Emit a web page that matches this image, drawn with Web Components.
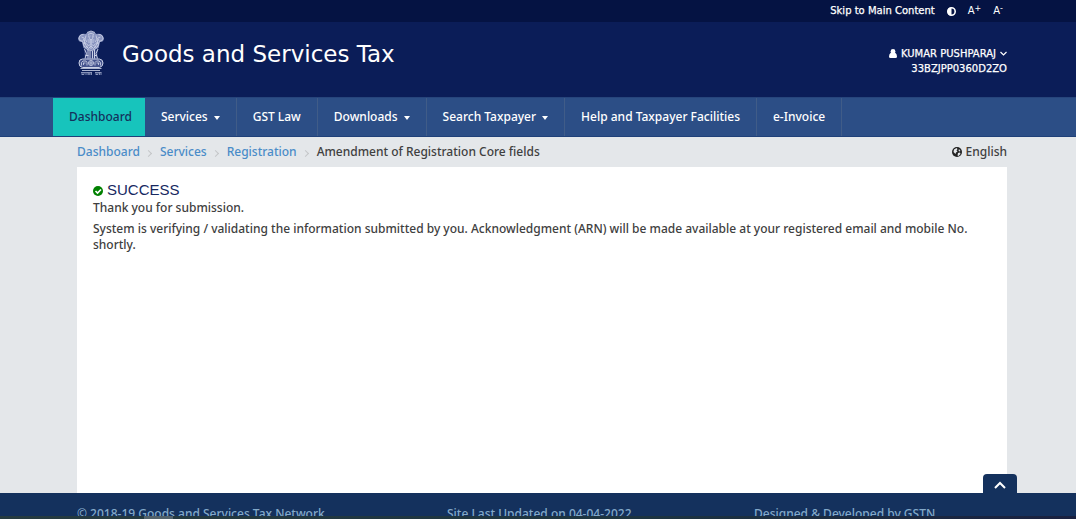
<!DOCTYPE html>
<html lang="en">
<head>
<meta charset="utf-8">
<title>Goods and Services Tax</title>
<style>
:root{--gutter-l:77px;--gutter-r:69px;--ui:"Noto Sans","Open Sans",sans-serif;--wide:"DejaVu Sans",sans-serif}
html,body{margin:0;height:100%}
body{background:#e4e7ea;color:#404040;font:500 12px/16px var(--ui)}
</style>
</head>
<body>
<gst-page>
  <gst-topbar></gst-topbar>
  <gst-header user="KUMAR PUSHPARAJ" gstin="33BZJPP0360D2ZO">Goods and Services Tax</gst-header>
  <gst-nav>
    <gst-nav-item active>Dashboard</gst-nav-item>
    <gst-nav-item menu>Services</gst-nav-item>
    <gst-nav-item>GST Law</gst-nav-item>
    <gst-nav-item menu>Downloads</gst-nav-item>
    <gst-nav-item menu>Search Taxpayer</gst-nav-item>
    <gst-nav-item>Help and Taxpayer Facilities</gst-nav-item>
    <gst-nav-item>e-Invoice</gst-nav-item>
  </gst-nav>
  <gst-breadcrumb></gst-breadcrumb>
  <gst-message>
    <span slot="title">SUCCESS</span>
    <span slot="lead">Thank you for submission.</span>
    System is verifying / validating the information submitted by you. Acknowledgment (ARN) will be made available at your registered email and mobile No. shortly.
  </gst-message>
  <gst-footer></gst-footer>
</gst-page>
<script>
const define=(name,html,setup)=>customElements.define(name,class extends HTMLElement{
  constructor(){
    super();
    const t=document.createElement('template');
    t.innerHTML=html;
    this.attachShadow({mode:'open'}).append(t.content.cloneNode(true));
  }
  connectedCallback(){ if(setup) setup(this,this.shadowRoot); }
});

define('gst-page',`
<style>:host{display:flex;flex-direction:column;min-height:100vh}</style><slot></slot>`);

define('gst-topbar',`
<style>
:host{display:flex;justify-content:flex-end;align-items:center;gap:12px;height:22px;padding:0 73px 0 var(--gutter-l);background:#051343;font:10px/16px var(--wide);color:#fff}
a,button{-webkit-text-stroke:.25px #fff}
a{color:inherit;text-decoration:none}
button{all:unset;cursor:pointer;display:block}
svg{display:block}
sup{font-size:8px;line-height:1;vertical-align:3px}
</style>
<a href="#main">Skip to Main Content</a>
<button aria-label="Toggle contrast"><svg width="9" height="9" viewBox="0 0 18 18"><circle cx="9" cy="9" r="7.4" fill="none" stroke="#fff" stroke-width="3.2"/><path d="M9 1a8 8 0 0 0 0 16z" fill="#fff"/></svg></button>
<button>A<sup>+</sup></button>
<button>A<sup>-</sup></button>`);

define('gst-emblem',`
<style>:host{display:block}svg{display:block}</style>
<svg width="28" height="46" viewBox="0 0 56 92" fill="none" stroke="#cbd1e6" stroke-width="1.7" role="img" aria-label="State emblem">
<path fill="#8a95c0" stroke="none" d="M17 8Q28-3 39 8Q52 6 54 18Q52 25 46 24L43 36Q28 47 13 36L10 24Q4 25 2 18Q4 6 17 8z"/>
<path fill="#35437f" stroke="none" d="M14 40h28l-2 18H16z"/>
<path d="M20 5q8-6 16 0M22 9q6-5 12 0M4 18q0-9 9-9M52 18q0-9-9-9M9 14l5 2M47 14l-5 2M4 19l7 4 4-7M52 19l-7 4-4-7M18 11q-5 8 2 13M38 11q5 8-2 13M23 11l2 6 3 3 3-3 2-6M21 20h14M22 24h12M25 12h2M30 12h2M12 24q0 10 8 13M44 24q0 10-8 13M16 24q0 8 6 11M40 24q0 8-6 11M19 27l4 5 5-5 5 5 4-5M18 32l5 5 5-5 5 5 5-5M20 39q8 5 16 0M15 19v9M41 19v9M28 20v18"/>
<path stroke-width="2" d="M15 38l4 9-3 10M22 40v17M26 42v15M31 42v15M35 40v17M42 38l-4 9 3 10M17 51h6M34 51h5"/>
<path d="M11 58h34q7 1 7 8t-7 9H11q-7-1-7-9t7-8z" fill="#46548e" stroke-width="2"/>
<circle cx="28" cy="66" r="5"/><path d="M28 61v10M23 66h10M9 71v-6l3-3h6l2 3v6M12 66h5M13 70v-4M36 71v-6l3-3h5l3 3v6M39 66h6M43 70v-4M7 77h42M10 81h36"/>
<path stroke-width="1.5" stroke="#aab2d2" d="M8 85h22M36 85h13M10 85v5M14 85v4M18 86v4M22 85v5M26 86v4M29 85v5M38 85v5M42 86v3M45 85v5M48 85v5M10 89h4M22 88h4M38 89h4"/>
</svg>`);

define('gst-header',`
<style>
:host{display:flex;align-items:flex-start;min-height:75px;box-sizing:border-box;padding:8px var(--gutter-r) 0 var(--gutter-l);background:#0b1d58;color:#fff;font-family:var(--wide)}
h1{margin:9px 0 0 17px;font-size:23px;line-height:30px;font-weight:400;flex:1}
.user{margin-top:16px;font-size:10px;line-height:15px;text-align:right}
button{all:unset;cursor:pointer;display:flex;align-items:center;gap:4px;margin-left:auto;width:max-content}
.name,.id{-webkit-text-stroke:.25px #fff}
svg{display:block}
</style>
<gst-emblem></gst-emblem>
<h1><slot></slot></h1>
<div class="user">
<button aria-haspopup="true"><svg width="8" height="9" viewBox="0 0 16 18" fill="#fff"><circle cx="8" cy="5" r="4.8"/><path d="M4 7h8q4 3 4 8q0 3-3 3H3q-3 0-3-3q0-5 4-8z"/></svg><span class="name"></span><svg width="7" height="5" viewBox="0 0 14 10" fill="none" stroke="#fff" stroke-width="2.4"><path d="M1 2l6 6 6-6"/></svg></button>
<span class="id"></span></div>`,(el,r)=>{
  r.querySelector('.name').textContent=el.getAttribute('user');
  r.querySelector('.id').textContent=el.getAttribute('gstin');
});

define('gst-nav',`
<style>
:host{display:block;background:#2c4e86;border-top:1px solid #27457c;border-bottom:1px solid #1f4079;padding-left:53px}
nav{display:flex;min-height:38px}
</style><nav aria-label="Main"><slot></slot></nav>`);

define('gst-nav-item',`
<style>
:host{display:flex;border-right:1px solid #405c88}
a{display:flex;align-items:center;gap:6px;padding:0 16px;color:#fff;text-decoration:none;line-height:16px;white-space:nowrap}
i{display:none;border:3px solid transparent;border-top:4px solid #fff;border-bottom:0;margin-top:2px}
:host([menu]) i{display:block}
:host([active]){background:#17c4bc;border-color:#17c4bc}
:host([active]) a{color:#14315d;padding-right:12px}
</style><a href="#"><slot></slot><i></i></a>`);

define('gst-breadcrumb',`
<style>
:host{display:flex;justify-content:space-between;align-items:center;height:30px;padding:0 var(--gutter-r) 0 var(--gutter-l)}
ol{display:flex;list-style:none;margin:0;padding:0}
li{display:flex;align-items:center}
li:not(:last-child)::after{content:"";width:4px;height:4px;border:solid #c4c6c8;border-width:1px 1px 0 0;transform:rotate(45deg);margin:2px 9px 0 6px}
a{color:#4a8cc8;text-decoration:none}
button{all:unset;cursor:pointer;display:flex;align-items:center;gap:4px}
svg{display:block}
</style>
<ol><li><a href="#">Dashboard</a></li><li><a href="#">Services</a></li><li><a href="#">Registration</a></li><li>Amendment of Registration Core fields</li></ol>
<button><svg width="10" height="10" viewBox="0 0 20 20"><circle cx="10" cy="10" r="10" fill="#222"/><path fill="#e4e7ea" d="M4 5l5-3 2 2-2 3 2 2-3 2-1 3-4-4zM14 4l3 4-2 1-2-2zM12 12l4-1 1 3-4 4-2-1z"/></svg>English</button>`);

define('gst-message',`
<style>
:host{display:block;flex:1;margin:0 var(--gutter-r) 0 var(--gutter-l);padding:14px 16px;background:#fff}
h2{display:flex;align-items:center;gap:4px;margin:0 0 1px;font:400 15px/18px "Liberation Sans",sans-serif;color:#17285f}
p{margin:0 0 5px}
svg{display:block;margin-top:2px}
</style>
<main id="main"><h2><svg width="10" height="10" viewBox="0 0 20 20"><circle cx="10" cy="10" r="10" fill="#008000"/><path d="M5 10l4 4 7-7" fill="none" stroke="#fff" stroke-width="3.4"/></svg><slot name="title"></slot></h2>
<p><slot name="lead"></slot></p>
<p><slot></slot></p></main>`);

define('gst-footer',`
<style>
:host{display:block;position:relative;background:#14315d;color:#83a9c9}
.cols{display:grid;grid-template-columns:370fr 307fr 253fr;height:23px;overflow:hidden;padding:0 var(--gutter-r) 0 var(--gutter-l)}
.cols span{padding-top:13px;white-space:nowrap}
.strip{height:3px;background:linear-gradient(90deg,#263b40,#1d3440 60%,#1a2140)}
.strip i{display:block;width:29px;height:3px;margin-left:144px;background:#52626b}
button{all:unset;cursor:pointer;position:absolute;right:59px;bottom:100%;width:34px;height:19px;border-radius:4px 4px 0 0;background:#14315d;display:grid;place-items:center}
svg{display:block;margin-top:3px}
</style>
<button aria-label="Back to top"><svg width="12" height="8" viewBox="0 0 12 8" fill="none" stroke="#fff" stroke-width="2"><path d="M1 7l5-5 5 5"/></svg></button>
<div class="cols"><span>© 2018-19 Goods and Services Tax Network</span><span>Site Last Updated on 04-04-2022</span><span>Designed &amp; Developed by GSTN</span></div>
<div class="strip"><i></i></div>`);
</script>
</body>
</html>
